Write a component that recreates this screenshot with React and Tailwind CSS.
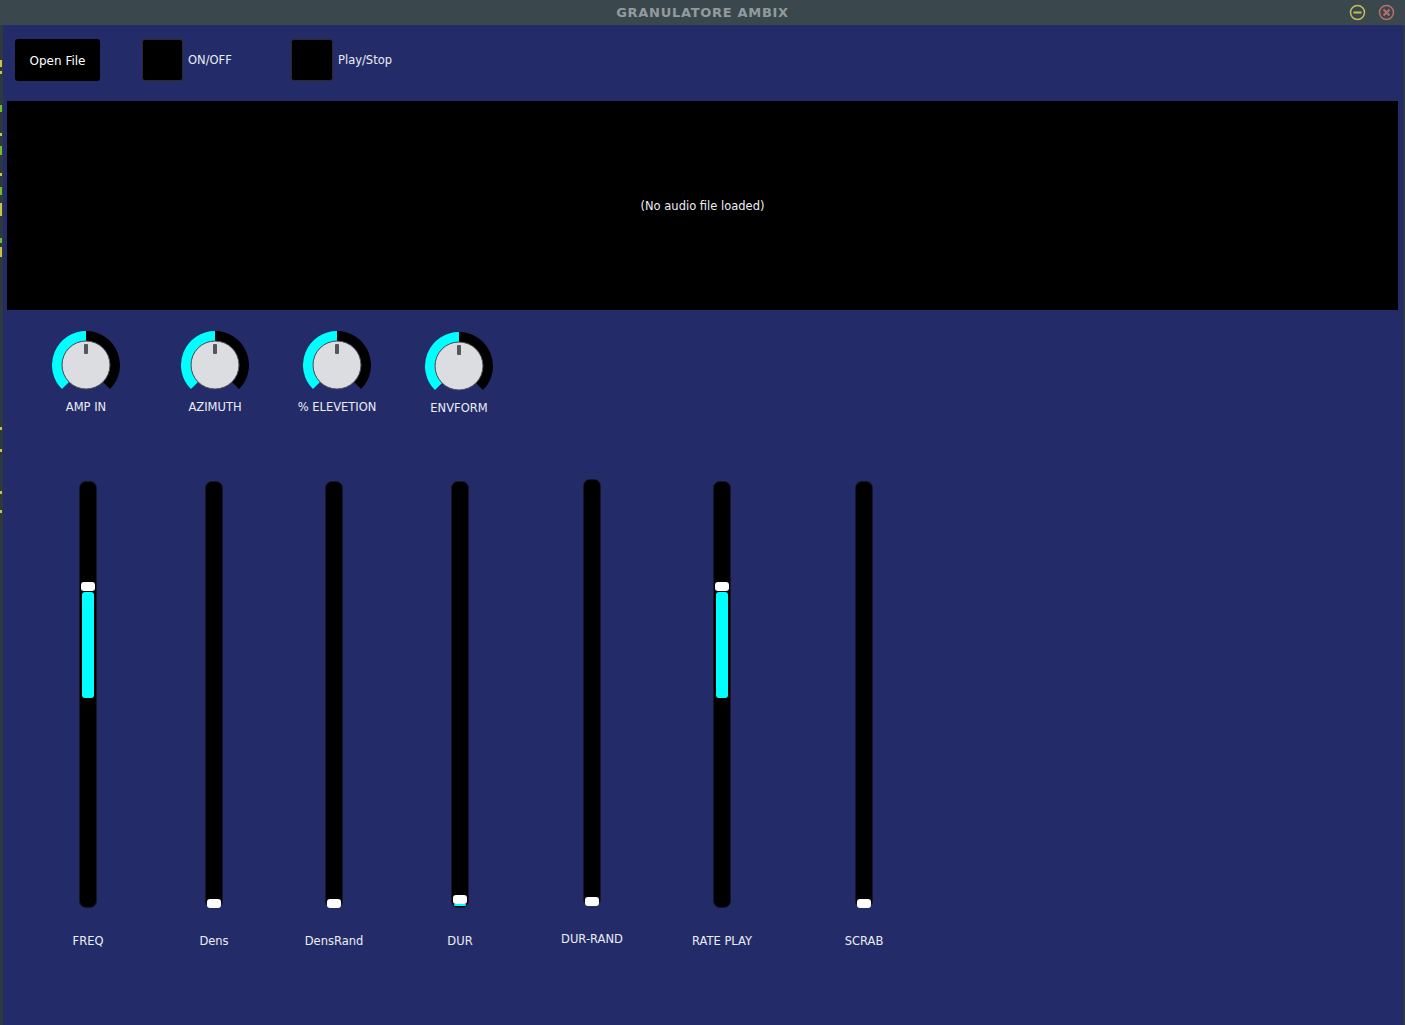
import React from 'react'

const KNOBS = [
  { label: 'AMP IN', cls: 'ml-[33px]' },
  { label: 'AZIMUTH', cls: 'ml-[29px]' },
  { label: '% ELEVETION', cls: 'ml-[22px]' },
  { label: 'ENVFORM', cls: 'ml-[22px] mt-[1px]' }
]

// thumb = offset of the white handle from track top, fill = cyan bar [top, height]
const SLIDERS = [
  { label: 'FREQ', cls: 'ml-[35px]', thumb: 100, fill: [110, 106] },
  { label: 'Dens', cls: 'ml-[26px]', thumb: 417 },
  { label: 'DensRand', cls: 'ml-[20px]', thumb: 417 },
  { label: 'DUR', cls: 'ml-[26px]', thumb: 413, fill: [422, 2] },
  { label: 'DUR-RAND', cls: 'ml-[32px] -mt-[2px]', thumb: 417 },
  { label: 'RATE PLAY', cls: 'ml-[30px]', thumb: 100, fill: [110, 106] },
  { label: 'SCRAB', cls: 'ml-[42px]', thumb: 417 }
]

// marks of the window behind, peeking out at the left edge: [top, height, colour]
const EDGE = [
  ['mt-[35px] h-[7px]', 'bg-[#c9c44a]'],
  ['mt-[4px] h-[3px]', 'bg-[#c9c44a]'],
  ['mt-[31px] h-[7px]', 'bg-[#6fbf2a]'],
  ['mt-[21px] h-[3px]', 'bg-[#c9c44a]'],
  ['mt-[10px] h-[9px]', 'bg-[#6fbf2a]'],
  ['mt-[18px] h-[3px]', 'bg-[#c9c44a]'],
  ['mt-[11px] h-[8px]', 'bg-[#6fbf2a]'],
  ['mt-[8px] h-[13px]', 'bg-[#c9c44a]'],
  ['mt-[22px] h-[5px]', 'bg-[#6fbf2a]'],
  ['mt-[4px] h-[10px]', 'bg-[#c9c44a]'],
  ['mt-[170px] h-[3px]', 'bg-[#c9c44a]'],
  ['mt-[19px] h-[3px]', 'bg-[#c9c44a]'],
  ['mt-[39px] h-[3px]', 'bg-[#c9c44a]'],
  ['mt-[16px] h-[3px]', 'bg-[#c9c44a]']
]

function Knob() {
  return (
    <svg width="70" height="62" viewBox="0 0 70 62">
      <path d="M14.5 55.5 A29 29 0 0 1 35 6" fill="none" stroke="#00ffff" strokeWidth="10" />
      <path d="M35 6 A29 29 0 0 1 55.5 55.5" fill="none" stroke="#000" strokeWidth="10" />
      <circle cx="35" cy="35" r="24" fill="#dcdde1" stroke="#4a4d55" strokeWidth="1" />
      <rect x="33" y="14" width="4" height="10" rx="1" fill="#54565c" />
    </svg>
  )
}

function Slider({ s }) {
  return (
    <div className={`w-[100px] flex flex-col items-center ${s.cls}`}>
      <div className="relative w-[18px] h-[427px] rounded-[7px] bg-black border border-[#15182a]">
        {s.fill && (
          <div
            className="absolute left-[2px] w-[12px] rounded-[3px] bg-[#00ffff]"
            style={{ top: s.fill[0], height: s.fill[1] }}
          />
        )}
        <div
          className="absolute left-[1px] w-[14px] h-[9px] rounded-[3px] bg-white"
          style={{ top: s.thumb }}
        />
      </div>
      <div className="mt-[25px] text-[11.5px] leading-[16px] text-[#ecedf5]">{s.label}</div>
    </div>
  )
}

export default function App() {
  return (
    <div className="w-[1405px] h-[1025px] flex flex-col bg-[#232c69] font-['DejaVu_Sans',sans-serif] overflow-hidden">
      <div className="relative h-[25px] shrink-0 bg-[#3a474c] flex items-center justify-center">
        <span className="text-[13px] font-bold tracking-[0.7px] text-[#919b9f]">GRANULATORE AMBIX</span>
        <div className="absolute right-[10px] top-[4px] flex gap-[12px]">
          <svg width="17" height="17" viewBox="0 0 17 17">
            <circle cx="8.5" cy="8.5" r="7" fill="none" stroke="#c4bf5c" strokeWidth="1.5" />
            <rect x="4.5" y="7.5" width="8" height="2" fill="#c4bf5c" />
          </svg>
          <svg width="17" height="17" viewBox="0 0 17 17">
            <circle cx="8.5" cy="8.5" r="7" fill="none" stroke="#b8706c" strokeWidth="1.5" />
            <path d="M5.5 5.5 L11.5 11.5 M11.5 5.5 L5.5 11.5" stroke="#b8706c" strokeWidth="2" />
          </svg>
        </div>
      </div>
      <div className="flex flex-1">
        <div className="w-[3px] bg-[#2d393c] flex flex-col">
          {EDGE.map(([pos, col], i) => (
            <div key={i} className={`w-[2px] ${pos} ${col}`} />
          ))}
        </div>
        <div className="flex-1 flex flex-col">
          <div className="mt-[14px] flex items-center h-[42px]">
            <button className="ml-[12px] w-[85px] h-[42px] rounded-[3px] bg-black text-white text-[12px] pt-[2px]">Open File</button>
            <div className="ml-[42px] w-[149px] flex items-center">
              <div className="w-[41px] h-[42px] rounded-[3px] bg-black border border-[#2a2a2e]" />
              <span className="ml-[5px] mt-[2px] text-[11.5px] text-[#ecedf5]">ON/OFF</span>
            </div>
            <div className="flex items-center">
              <div className="w-[42px] h-[42px] rounded-[3px] bg-black border border-[#2a2a2e]" />
              <span className="ml-[5px] mt-[2px] text-[11.5px] text-[#ecedf5]">Play/Stop</span>
            </div>
          </div>
          <div className="mt-[20px] ml-[4px] mr-[5px] h-[209px] bg-black flex items-center justify-center">
            <span className="mt-[2px] text-[11.5px] text-[#ecedf5]">(No audio file loaded)</span>
          </div>
          <div className="mt-[20px] flex">
            {KNOBS.map(k => (
              <div key={k.label} className={`w-[100px] flex flex-col items-center ${k.cls}`}>
                <Knob />
                <div className="mt-[7px] text-[11.5px] leading-[16px] text-[#ecedf5] whitespace-nowrap">{k.label}</div>
              </div>
            ))}
          </div>
          <div className="mt-[65px] flex items-start">
            {SLIDERS.map(s => <Slider key={s.label} s={s} />)}
          </div>
        </div>
        <div className="w-[2px] bg-[#2d393c]" />
      </div>
    </div>
  )
}
